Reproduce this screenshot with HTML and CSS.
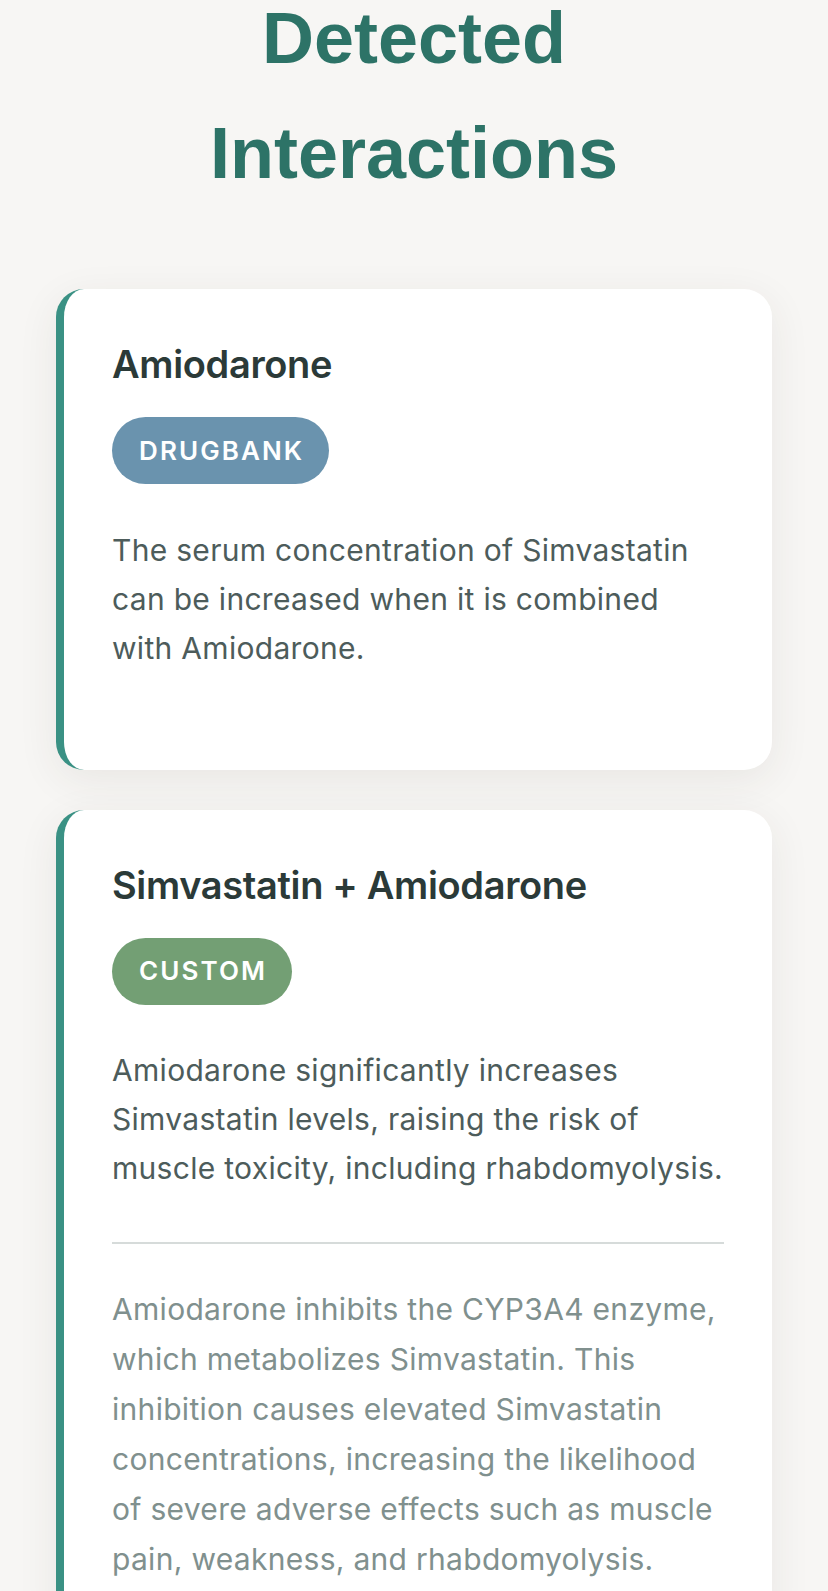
FILE: index.html
```html
<!DOCTYPE html>
<html lang="en">
<head>
<meta charset="utf-8">
<title>Detected Interactions</title>
<link rel="stylesheet" href="styles.css">
</head>
<body>
<main class="page">
  <h1 class="page-title">Detected Interactions</h1>

  <section class="card">
    <h3 class="card-title">Amiodarone</h3>
    <span class="badge badge-drugbank">DRUGBANK</span>
    <p class="desc">The serum concentration of Simvastatin can be increased when it is combined with Amiodarone.</p>
  </section>

  <section class="card">
    <h3 class="card-title">Simvastatin + Amiodarone</h3>
    <span class="badge badge-custom">CUSTOM</span>
    <p class="desc">Amiodarone significantly increases Simvastatin levels, raising the risk of muscle toxicity, including rhabdomyolysis.</p>
    <hr class="divider">
    <p class="explain">Amiodarone inhibits the CYP3A4 enzyme, which metabolizes Simvastatin. This inhibition causes elevated Simvastatin concentrations, increasing the likelihood of severe adverse effects such as muscle pain, weakness, and rhabdomyolysis.</p>
  </section>
</main>
</body>
</html>
```

FILE: styles.css
```css
html, body {
  margin: 0;
  padding: 0;
  background: #f7f6f4;
}

body {
  font-family: "Inter", "Noto Sans", sans-serif;
  color: #4d5c5b;
}

.page {
  padding: 0 56px 80px 56px;
  display: flex;
  flex-direction: column;
  gap: 40px;
}

.page-title {
  margin: -19.5px 0 38.5px 0;
  text-align: center;
  font-family: "Liberation Sans", Arial, sans-serif;
  font-weight: 700;
  font-size: 72px;
  line-height: 115px;
  color: #2d7367;
}

.card {
  background: #ffffff;
  border-left: 8px solid #3a9184;
  border-radius: 28px;
  padding: 48px;
  box-shadow: 0 10px 40px rgba(60, 50, 40, 0.08);
  display: flex;
  flex-direction: column;
  align-items: flex-start;
}

.card-title {
  margin: 0 0 25px 0;
  font-size: 38px;
  line-height: 55px;
  font-weight: 600;
  letter-spacing: -0.35px;
  color: #2b3a38;
}

.badge {
  display: inline-block;
  font-size: 26px;
  line-height: 32px;
  font-weight: 600;
  letter-spacing: 2.1px;
  color: #ffffff;
  padding: 17.5px 25px 17.5px 27px;
  border-radius: 40px;
}

.badge-drugbank {
  background: #6a93ae;
}

.badge-custom {
  background: #739f74;
}

.desc {
  margin: 41.5px 0 49px 0;
  font-size: 30px;
  line-height: 49px;
  letter-spacing: 0.3px;
  color: #4d5c5b;
}

.divider {
  align-self: stretch;
  margin: 0 0 40px 0;
  border: 0;
  height: 2px;
  background: #d6dbda;
}

.explain {
  margin: 0;
  font-size: 30px;
  line-height: 50px;
  letter-spacing: 0.3px;
  color: #80908e;
}
```
